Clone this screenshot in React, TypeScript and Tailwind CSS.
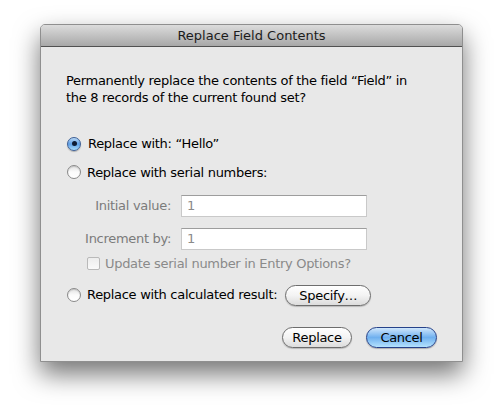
import React from "react";

function Radio({ checked }: { checked?: boolean }) {
  if (checked) {
    return (
      <span className="flex h-[14px] w-[14px] shrink-0 items-center justify-center rounded-full border border-[#3d5f95] bg-gradient-to-b from-[#b9d8f5] via-[#5d9ee6] to-[#a9dcfb] shadow-[0_1px_1px_rgba(0,0,0,0.25)]">
        <span className="h-[5px] w-[5px] rounded-full bg-[#0d1a33]" />
      </span>
    );
  }
  return (
    <span className="h-[14px] w-[14px] shrink-0 rounded-full border border-[#8a8a8a] bg-gradient-to-b from-[#e2e2e2] via-[#fbfbfb] to-[#ffffff] shadow-[inset_0_1px_1px_rgba(0,0,0,0.15)]" />
  );
}

function Field({ label }: { label: string }) {
  return (
    <div className="flex items-center">
      <span className="w-[115px] pr-[10px] text-right text-[#7b7b7b]">{label}</span>
      <div className="flex h-[22px] w-[186px] items-center border border-[#c9c9c9] border-t-[#9d9d9d] bg-white pl-[5px] text-[#8a8a8a]">
        1
      </div>
    </div>
  );
}

export default function App() {
  return (
    <div
      className="h-[417px] w-[502px] bg-white pl-[40px] pt-[24px] text-[13px] tracking-[-0.3px] text-black"
      style={{ fontFamily: '"DejaVu Sans", "Lucida Grande", sans-serif' }}
    >
      <div className="flex h-[338px] w-[423px] flex-col rounded-t-[5px] border border-[#8f8f8f] bg-[#e8e8e8] shadow-[0_12px_26px_rgba(0,0,0,0.55)]">
        <div className="flex h-[22px] items-center justify-center rounded-t-[4px] border-b border-[#515151] bg-gradient-to-b from-[#dcdcdc] to-[#a8a8a8] text-[13px] tracking-normal text-[#1c1c1c]">
          Replace Field Contents
        </div>
        <div className="flex flex-1 flex-col pl-[25px] pr-[24px]">
          <p className="mt-[25px] w-[350px] leading-[17px]">
            Permanently replace the contents of the field “Field” in the 8 records of the current found set?
          </p>

          <div className="mt-[28px] flex items-center gap-[7px] pl-[1px]">
            <Radio checked />
            <span>Replace with: “Hello”</span>
          </div>

          <div className="mt-[9px] flex items-center gap-[6px] pl-[1px]">
            <Radio />
            <span>Replace with serial numbers:</span>
          </div>

          <div className="mt-[13px] flex flex-col gap-[11px]">
            <Field label="Initial value:" />
            <Field label="Increment by:" />
          </div>

          <div className="mt-[4px] flex items-center gap-[5px] pl-[21px] text-[#8a8a8a]">
            <span className="h-[13px] w-[13px] rounded-[2px] border border-[#b9b9b9] bg-gradient-to-b from-[#ededed] to-[#fafafa]" />
            <span>Update serial number in Entry Options?</span>
          </div>

          <div className="mt-[11px] flex items-center gap-[6px] pl-[1px]">
            <Radio />
            <span>Replace with calculated result:</span>
            <button className="ml-[2px] h-[21px] w-[86px] rounded-full border border-[#6d6d6d] bg-gradient-to-b from-[#ffffff] via-[#f3f3f3] to-[#dcdcdc] text-[13px] shadow-[0_1px_1px_rgba(0,0,0,0.2)]">
              Specify…
            </button>
          </div>

          <div className="mt-[21px] flex justify-end gap-[14px] pr-[1px]">
            <button className="h-[21px] w-[70px] rounded-full border border-[#6d6d6d] bg-gradient-to-b from-[#ffffff] via-[#f3f3f3] to-[#dcdcdc] text-[13px] shadow-[0_1px_1px_rgba(0,0,0,0.2)]">
              Replace
            </button>
            <button className="h-[21px] w-[71px] rounded-full border border-[#26428a] bg-gradient-to-b from-[#cfe6fb] via-[#6fb0ef] to-[#b4e2fd] text-[13px] shadow-[0_1px_1px_rgba(0,0,0,0.25)]">
              Cancel
            </button>
          </div>
        </div>
      </div>
    </div>
  );
}
